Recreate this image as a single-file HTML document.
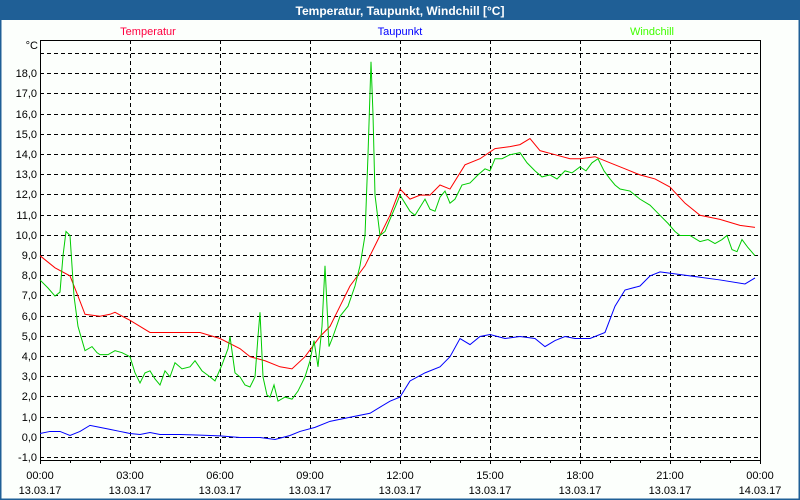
<!DOCTYPE html>
<html><head><style>
body{margin:0;width:800px;height:500px;overflow:hidden;background:#fff;font-family:"Liberation Sans",sans-serif}
</style></head><body>
<svg width="800" height="500" xmlns="http://www.w3.org/2000/svg" style="display:block">
<rect x="0" y="0" width="800" height="500" fill="#fcfffc"/>
<rect x="0.5" y="0.5" width="799" height="499" fill="none" stroke="#1f5f96" stroke-width="2"/>
<rect x="0" y="0" width="800" height="20" fill="#1f5f96"/>
<text x="400" y="15" text-anchor="middle" font-size="12" font-weight="bold" fill="#fff">Temperatur, Taupunkt, Windchill [°C]</text>
<g font-size="11">
<text x="148" y="35" text-anchor="middle" fill="#ff0040">Temperatur</text>
<text x="400" y="35" text-anchor="middle" fill="#0000ff">Taupunkt</text>
<text x="652" y="35" text-anchor="middle" fill="#40ff00">Windchill</text>
</g>
<g stroke="#000" stroke-dasharray="4,3" stroke-width="1">
<path d="M40 53.5H760M40 73.5H760M40 93.5H760M40 114.5H760M40 134.5H760M40 154.5H760M40 174.5H760M40 194.5H760M40 215.5H760M40 235.5H760M40 255.5H760M40 275.5H760M40 295.5H760M40 316.5H760M40 336.5H760M40 356.5H760M40 376.5H760M40 396.5H760M40 417.5H760M40 437.5H760M40 457.5H760"/>
<path d="M130.5 40V460M220.5 40V460M310.5 40V460M400.5 40V460M490.5 40V460M580.5 40V460M670.5 40V460"/>
</g>
<rect x="40.5" y="40.5" width="720" height="420" fill="none" stroke="#000"/>
<g stroke="#000"><path d="M40.5 460v4M70.5 460v3M100.5 460v3M130.5 460v4M160.5 460v3M190.5 460v3M220.5 460v4M250.5 460v3M280.5 460v3M310.5 460v4M340.5 460v3M370.5 460v3M400.5 460v4M430.5 460v3M460.5 460v3M490.5 460v4M520.5 460v3M550.5 460v3M580.5 460v4M610.5 460v3M640.5 460v3M670.5 460v4M700.5 460v3M730.5 460v3M760.5 460v4"/></g>
<g font-size="11" fill="#000" text-anchor="end">
<text x="38" y="49">°C</text>
<text x="37" y="77">18,0</text><text x="37" y="97">17,0</text><text x="37" y="118">16,0</text><text x="37" y="138">15,0</text><text x="37" y="158">14,0</text><text x="37" y="178">13,0</text><text x="37" y="198">12,0</text><text x="37" y="219">11,0</text><text x="37" y="239">10,0</text><text x="37" y="259">9,0</text><text x="37" y="279">8,0</text><text x="37" y="299">7,0</text><text x="37" y="320">6,0</text><text x="37" y="340">5,0</text><text x="37" y="360">4,0</text><text x="37" y="380">3,0</text><text x="37" y="400">2,0</text><text x="37" y="421">1,0</text><text x="37" y="441">0,0</text><text x="37" y="461">-1,0</text>
</g>
<g font-size="11" fill="#000" text-anchor="middle">
<text x="40" y="479">00:00</text><text x="40" y="494">13.03.17</text>
<text x="130" y="479">03:00</text><text x="130" y="494">13.03.17</text>
<text x="220" y="479">06:00</text><text x="220" y="494">13.03.17</text>
<text x="310" y="479">09:00</text><text x="310" y="494">13.03.17</text>
<text x="400" y="479">12:00</text><text x="400" y="494">13.03.17</text>
<text x="490" y="479">15:00</text><text x="490" y="494">13.03.17</text>
<text x="580" y="479">18:00</text><text x="580" y="494">13.03.17</text>
<text x="670" y="479">21:00</text><text x="670" y="494">13.03.17</text>
<text x="760" y="479">00:00</text><text x="760" y="494">14.03.17</text>
</g>
<g transform="translate(0,437.5) scale(1,-20.2)" fill="none" stroke-width="1">
<polyline vector-effect="non-scaling-stroke" stroke="#0000ff" points="40,0.2 50,0.3 60,0.3 70,0.1 80,0.3 90,0.6 100,0.5 110,0.4 120,0.3 130,0.2 140,0.15 150,0.25 160,0.15 180,0.15 200,0.12 220,0.08 240,0.0 260,0.0 275,-0.1 290,0.1 300,0.3 315,0.5 330,0.8 350,1.0 370,1.2 380,1.5 390,1.8 400,2.0 410,2.8 425,3.2 440,3.5 450,4.0 460,4.9 470,4.6 480,5.0 490,5.1 505,4.9 520,5.0 535,4.9 545,4.5 555,4.8 565,5.0 575,4.9 590,4.9 605,5.2 615,6.5 625,7.3 640,7.5 650,8.0 660,8.2 690,8.0 720,7.8 745,7.6 755,7.9"/>
<polyline vector-effect="non-scaling-stroke" stroke="#ff0000" points="40,9.0 55,8.4 70,8.0 78,7.0 85,6.1 100,6.0 110,6.1 115,6.2 130,5.8 150,5.2 170,5.2 200,5.2 220,4.9 240,4.4 250,4.0 265,3.8 280,3.5 292,3.4 305,4.0 320,5.0 330,5.5 340,6.5 350,7.5 365,8.5 375,9.5 380,10.0 390,11.0 400,12.3 410,11.8 420,12.0 430,12.0 440,12.5 450,12.3 465,13.5 480,13.8 495,14.3 510,14.4 520,14.5 530,14.8 540,14.2 555,14.0 570,13.8 580,13.8 595,13.9 610,13.6 625,13.3 640,13.0 655,12.8 670,12.4 685,11.6 700,11.0 720,10.8 740,10.5 755,10.4"/>
<polyline vector-effect="non-scaling-stroke" stroke="#00cc00" points="40,7.8 48,7.4 55,7.0 60,7.2 63,9.0 66,10.2 70,10.0 74,7.0 78,5.5 85,4.3 92,4.5 97,4.2 100,4.1 108,4.1 115,4.3 122,4.2 130,4.0 135,3.2 140,2.7 145,3.2 150,3.3 155,2.9 160,2.6 165,3.3 170,3.0 175,3.7 182,3.4 190,3.5 195,3.8 202,3.3 210,3.0 215,2.8 222,3.6 228,4.4 230,5.0 235,3.2 240,3.0 245,2.6 250,2.5 255,3.0 258,5.0 260,6.2 263,3.0 267,2.1 270,2.0 274,2.6 278,1.8 285,2.0 292,1.9 298,2.3 305,3.0 310,3.8 314,4.8 318,3.5 322,5.5 325,8.5 329,4.5 333,5.0 340,6.0 348,6.5 355,7.5 360,8.5 365,10.0 368,14.0 371,18.6 373,16.0 375,12.0 380,10.0 385,10.2 390,10.8 396,11.5 400,12.0 405,11.6 410,11.2 415,11.0 420,11.4 425,11.8 430,11.3 435,11.2 440,11.9 445,12.2 450,11.6 455,11.8 462,12.5 470,12.6 478,13.0 485,13.3 490,13.2 495,13.8 502,13.8 510,14.0 520,14.1 527,13.6 535,13.2 542,12.9 550,13.0 557,12.8 565,13.2 572,13.1 580,13.4 586,13.2 592,13.6 598,13.8 604,13.2 610,12.8 615,12.5 620,12.3 630,12.2 640,11.8 650,11.5 660,11.0 668,10.6 675,10.2 680,10.0 690,10.0 700,9.7 708,9.8 715,9.6 722,9.8 727,10.0 732,9.3 737,9.2 742,9.8 748,9.4 755,9.0"/>
</g>
</svg>
</body></html>
